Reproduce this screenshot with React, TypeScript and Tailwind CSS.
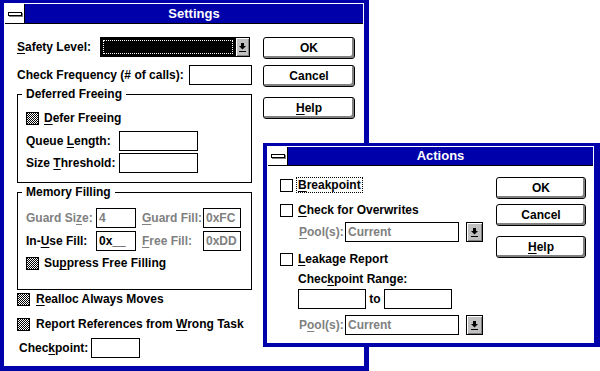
import type { ReactNode } from "react";

// Windows 3.1 style "Settings" dialog with an "Actions" dialog on top of it

function U({ children }: { children: ReactNode }) {
  return <span className="underline decoration-1 underline-offset-2">{children}</span>;
}

function Arrow() {
  return (
    <svg width="7" height="9" viewBox="0 0 7 9" className="shrink-0">
      <rect x="2" y="0" width="3" height="3" fill="#000" />
      <polygon points="0,3 7,3 3.5,6.5" fill="#000" />
      <rect x="0" y="8" width="7" height="1" fill="#000" />
    </svg>
  );
}

function Check({ checked = false }: { checked?: boolean }) {
  return (
    <svg width="13" height="13" viewBox="0 0 13 13" className="shrink-0">
      <defs>
        <pattern id="dither" width="2" height="2" patternUnits="userSpaceOnUse">
          <rect width="2" height="2" fill="#fff" />
          <rect x="0" y="0" width="1" height="1" fill="#000" />
          <rect x="1" y="1" width="1" height="1" fill="#000" />
        </pattern>
      </defs>
      <rect x="0.5" y="0.5" width="12" height="12" fill={checked ? "url(#dither)" : "#fff"} stroke="#000" />
    </svg>
  );
}

function Edit({ className = "", gray = false, children }: { className?: string; gray?: boolean; children?: ReactNode }) {
  return (
    <div
      className={`flex h-[20px] shrink-0 items-center border border-black bg-white pl-[2px] ${
        gray ? "text-[#808080]" : "text-black"
      } ${className}`}
    >
      {children}
    </div>
  );
}

function Btn({ className = "", children }: { className?: string; children: ReactNode }) {
  return (
    <div
      className={`flex h-[22px] items-center justify-center rounded-[3px] border border-black bg-white shadow-[inset_-2px_-2px_0_#808080] ${className}`}
    >
      {children}
    </div>
  );
}

function DropBtn({ className = "" }: { className?: string }) {
  return (
    <div
      className={`flex items-center justify-center bg-[#c0c0c0] shadow-[inset_1px_1px_0_#fff,inset_-1px_-1px_0_#808080] ${className}`}
    >
      <Arrow />
    </div>
  );
}

function Win({
  title,
  frame,
  titleH,
  children,
}: {
  title: string;
  frame: string;
  titleH: string;
  children: ReactNode;
}) {
  return (
    <div className={`flex flex-col border-solid border-[#0000aa] bg-white p-px ${frame}`}>
      <div className={`flex shrink-0 border-b border-black ${titleH}`}>
        <div className="flex w-[20px] items-center justify-center border-r border-black bg-white">
          <div className="h-[4px] w-[14px] border border-black bg-white shadow-[1px_1px_0_#808080]" />
        </div>
        <div className="flex flex-1 items-center justify-center bg-[#0000aa] text-[13px] font-bold text-white">
          {title}
        </div>
      </div>
      <div className="flex min-h-0 flex-1">{children}</div>
    </div>
  );
}

function Settings() {
  return (
    <Win
      title="Settings"
      frame="h-[371px] w-[369px] border-l-4 border-t-[3px] border-r-[5px] border-b-[5px]"
      titleH="h-[20px]"
    >
      <div className="ml-[12px] flex w-[235px] flex-col pt-[13px]">
        <div className="flex h-[20px] items-center">
          <span className="w-[83px]">
            <U>S</U>afety Level:
          </span>
          <div className="flex h-[20px] w-[150px] border border-black">
            <div className="flex-1 bg-black p-[2px]">
              <div className="h-full border border-dotted border-white" />
            </div>
            <DropBtn className="w-[14px] border-l border-black" />
          </div>
        </div>

        <div className="mt-[8px] flex h-[20px] items-center">
          <span className="w-[172px]">Check Frequency (# of calls):</span>
          <Edit className="w-[63px]" />
        </div>

        {/* Deferred Freeing */}
        <fieldset className="mt-[2px] border border-black pb-[9px] pl-[8px]">
          <legend className="-ml-[4px] px-[4px] leading-[14px]">Deferred Freeing</legend>
          <div className="mt-[10px] flex h-[14px] items-center">
            <Check checked />
            <span className="ml-[5px]">
              <U>D</U>efer Freeing
            </span>
          </div>
          <div className="mt-[6px] flex h-[20px] items-center">
            <span className="w-[93px]">
              Queue <U>L</U>ength:
            </span>
            <Edit className="w-[79px]" />
          </div>
          <div className="mt-[2px] flex h-[20px] items-center">
            <span className="w-[93px]">
              Size <U>T</U>hreshold:
            </span>
            <Edit className="w-[79px]" />
          </div>
        </fieldset>

        {/* Memory Filling */}
        <fieldset className="mt-[2px] border border-black pb-[19px] pl-[8px]">
          <legend className="-ml-[4px] px-[4px] leading-[14px]">Memory Filling</legend>
          <div className="mt-[9px] flex h-[20px] items-center text-[#808080]">
            <span className="w-[70px]">
              Guard Si<U>z</U>e:
            </span>
            <Edit className="w-[40px]" gray>
              4
            </Edit>
            <span className="ml-[6px] w-[61px]">
              <U>G</U>uard Fill:
            </span>
            <Edit className="w-[38px]" gray>
              0xFC
            </Edit>
          </div>
          <div className="mt-[3px] flex h-[20px] items-center">
            <span className="w-[70px]">
              In-<U>U</U>se Fill:
            </span>
            <Edit className="w-[40px]">0x__</Edit>
            <span className="ml-[6px] w-[61px] text-[#808080]">
              <U>F</U>ree Fill:
            </span>
            <Edit className="w-[38px]" gray>
              0xDD
            </Edit>
          </div>
          <div className="mt-[5px] flex h-[14px] items-center">
            <Check checked />
            <span className="ml-[5px]">
              Su<U>p</U>press Free Filling
            </span>
          </div>
        </fieldset>

        <div className="mt-[2px] flex h-[14px] items-center">
          <Check checked />
          <span className="ml-[6px]">
            <U>R</U>ealloc Always Moves
          </span>
        </div>
        <div className="mt-[11px] flex h-[14px] items-center">
          <Check checked />
          <span className="ml-[6px]">
            Report References from <U>W</U>rong Task
          </span>
        </div>
        <div className="mt-[7px] flex h-[20px] items-center">
          <span className="ml-[2px] w-[72px]">
            Chec<U>k</U>point:
          </span>
          <Edit className="w-[49px]" />
        </div>
      </div>

      <div className="ml-[11px] flex flex-col pt-[13px]">
        <Btn className="w-[92px]">OK</Btn>
        <Btn className="mt-[6px] w-[92px]">Cancel</Btn>
        <Btn className="mt-[10px] w-[92px]">
          <U>H</U>elp
        </Btn>
      </div>
    </Win>
  );
}

function PoolRow({ label, className = "" }: { label: ReactNode; className?: string }) {
  return (
    <div className={`flex h-[20px] items-center ${className}`}>
      <span className="ml-[19px] w-[46px] text-[#808080]">{label}</span>
      <Edit className="w-[114px]" gray>
        Current
      </Edit>
      <DropBtn className="ml-[7px] h-[20px] w-[17px] border border-black" />
    </div>
  );
}

function Actions() {
  return (
    <div className="absolute left-[263px] top-[143px]">
      <Win
        title="Actions"
        frame="h-[204px] w-[337px] border-l-4 border-t-[3px] border-r-[6px] border-b-4"
        titleH="h-[19px]"
      >
        <div className="ml-[12px] flex w-[216px] flex-col pt-[11px]">
          <div className="flex h-[16px] items-center">
            <Check />
            <span className="ml-[3px] border border-dotted border-black px-px leading-[14px]">
              <U>B</U>reakpoint
            </span>
          </div>
          <div className="mt-[9px] flex h-[16px] items-center">
            <Check />
            <span className="ml-[5px]">
              <U>C</U>heck for Overwrites
            </span>
          </div>
          <PoolRow
            className="mt-[4px]"
            label={
              <>
                <U>P</U>ool(s):
              </>
            }
          />
          <div className="mt-[9px] flex h-[16px] items-center">
            <Check />
            <span className="ml-[5px]">
              <U>L</U>eakage Report
            </span>
          </div>
          <div className="ml-[18px] mt-[5px] flex h-[14px] items-center">
            Chec<U>k</U>point Range:
          </div>
          <div className="ml-[18px] mt-[3px] flex h-[20px] items-center">
            <Edit className="w-[68px]" />
            <span className="w-[18px] text-center">to</span>
            <Edit className="w-[68px]" />
          </div>
          <PoolRow
            className="mt-[6px]"
            label={
              <>
                P<U>o</U>ol(s):
              </>
            }
          />
        </div>

        <div className="flex flex-col pt-[11px]">
          <Btn className="w-[90px]">OK</Btn>
          <Btn className="mt-[5px] w-[90px]">Cancel</Btn>
          <Btn className="mt-[10px] w-[90px]">
            <U>H</U>elp
          </Btn>
        </div>
      </Win>
    </div>
  );
}

export default function App() {
  return (
    <div className="relative h-[371px] w-[600px] overflow-hidden bg-white font-['Liberation_Sans',Arial,sans-serif] text-[12px] font-bold leading-[14px] text-black">
      <Settings />
      <Actions />
    </div>
  );
}
